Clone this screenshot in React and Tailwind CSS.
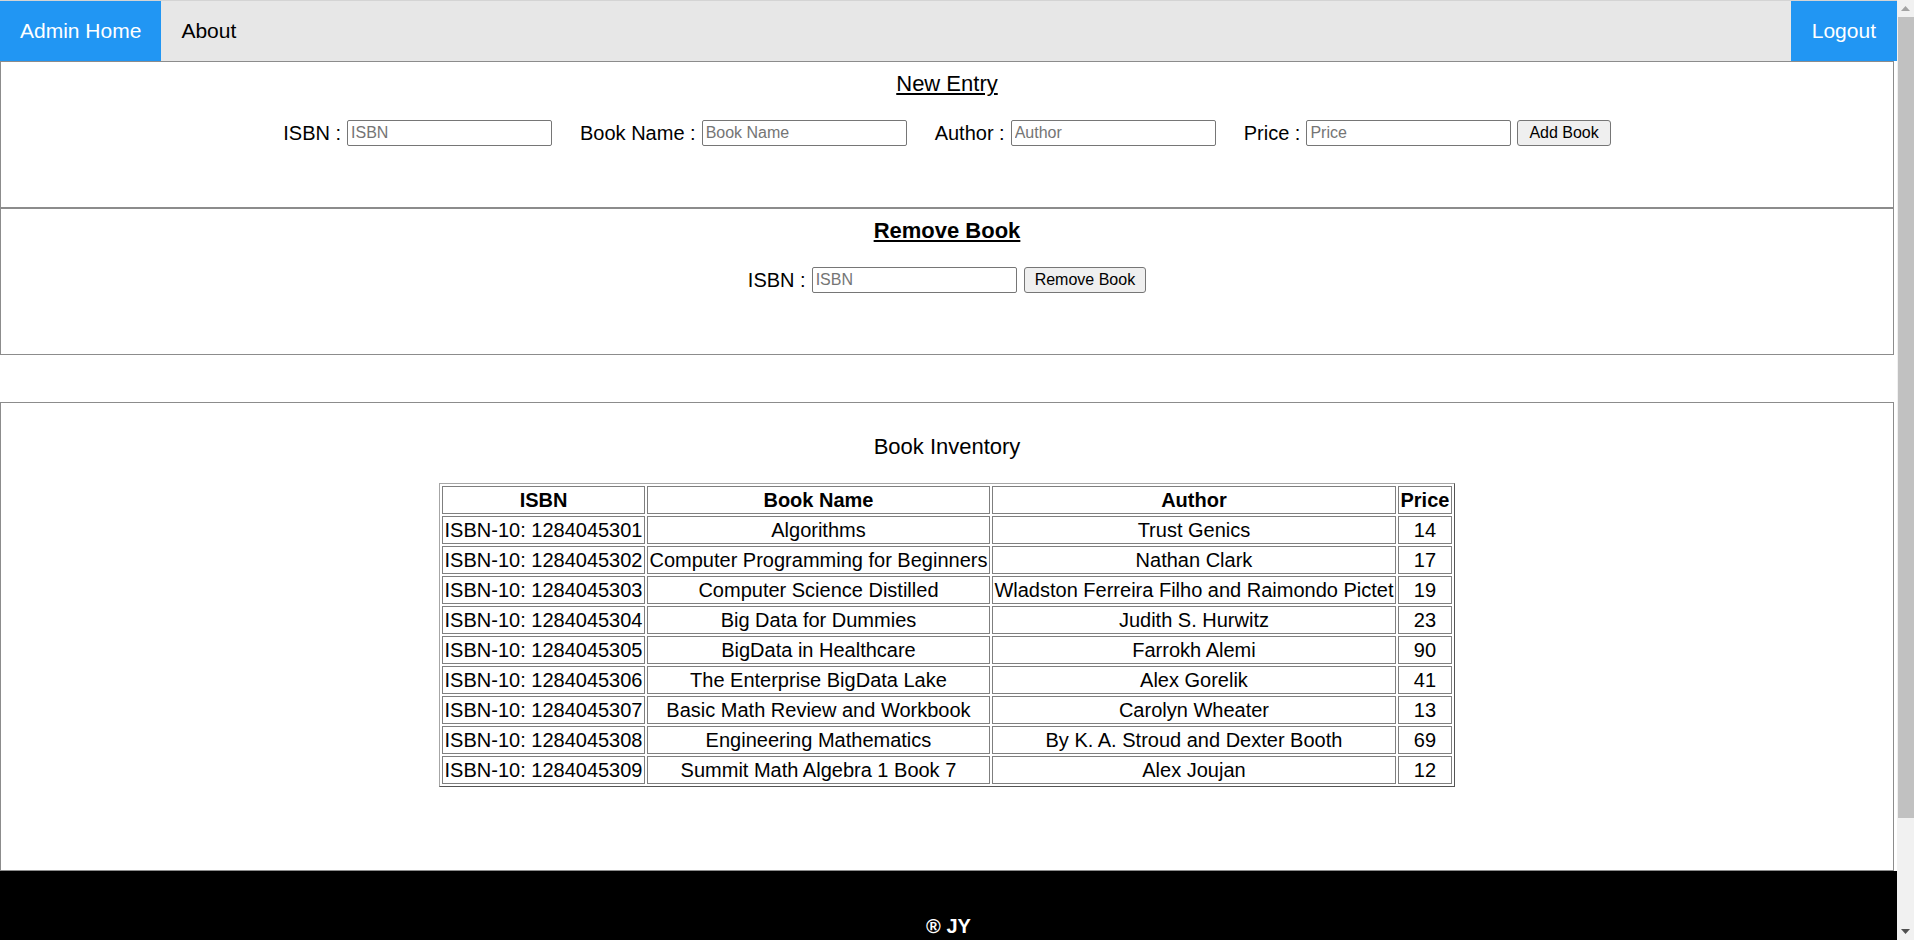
import React from 'react';

const books = [
  { isbn: 'ISBN-10: 1284045301', name: 'Algorithms', author: 'Trust Genics', price: 14 },
  { isbn: 'ISBN-10: 1284045302', name: 'Computer Programming for Beginners', author: 'Nathan Clark', price: 17 },
  { isbn: 'ISBN-10: 1284045303', name: 'Computer Science Distilled', author: 'Wladston Ferreira Filho and Raimondo Pictet', price: 19 },
  { isbn: 'ISBN-10: 1284045304', name: 'Big Data for Dummies', author: 'Judith S. Hurwitz', price: 23 },
  { isbn: 'ISBN-10: 1284045305', name: 'BigData in Healthcare', author: 'Farrokh Alemi', price: 90 },
  { isbn: 'ISBN-10: 1284045306', name: 'The Enterprise BigData Lake', author: 'Alex Gorelik', price: 41 },
  { isbn: 'ISBN-10: 1284045307', name: 'Basic Math Review and Workbook', author: 'Carolyn Wheater', price: 13 },
  { isbn: 'ISBN-10: 1284045308', name: 'Engineering Mathematics', author: 'By K. A. Stroud and Dexter Booth', price: 69 },
  { isbn: 'ISBN-10: 1284045309', name: 'Summit Math Algebra 1 Book 7', author: 'Alex Joujan', price: 12 },
];

const Field = ({ label, placeholder }) => (
  <div className="flex items-center">
    <span className="mr-[6px]">{label}</span>
    <input
      placeholder={placeholder}
      className="w-[205px] h-[26px] border border-[#767676] rounded-[2px] px-[3px] text-[16px] text-black placeholder:text-[#757575] bg-white outline-none"
    />
  </div>
);

const Btn = ({ children, className = '' }) => (
  <button className={`h-[26px] px-[10px] border border-[#767676] rounded-[3px] bg-[#efefef] text-[16px] text-black leading-none ${className}`}>
    {children}
  </button>
);

const Cell = ({ children, head }) => (
  <td className={`h-[28px] px-[1.5px] py-[1px] border border-[#7f7f7f] text-center whitespace-nowrap leading-[24px] ${head ? 'font-bold' : ''}`}>
    {children}
  </td>
);

export default function App() {
  return (
    <div className="h-[940px] flex overflow-hidden bg-white text-black font-['Liberation_Sans',Arial,sans-serif]">
      <div className="flex-1 min-w-0 flex flex-col">
        {/* top nav */}
        <nav className="h-[61px] shrink-0 flex bg-[#e7e7e7] border-t border-[#d4d4d4] text-[21px]">
          <a className="h-full flex items-center px-[20px] bg-[#2196F3] text-white">Admin Home</a>
          <a className="h-full flex items-center px-[20px]">About</a>
          <a className="ml-auto h-full flex items-center px-[21px] bg-[#2196F3] text-white">Logout</a>
        </nav>

        <div className="mr-[3px]">
          <section className="h-[147px] border border-[#8c8c8c] pt-[9px] flex flex-col items-center text-[20px]">
            <h3 className="text-[22px] leading-[25px] underline">New Entry</h3>
            <div className="mt-[22px] flex items-center gap-[28px]">
              <Field label="ISBN :" placeholder="ISBN" />
              <Field label="Book Name :" placeholder="Book Name" />
              <Field label="Author :" placeholder="Author" />
              <div className="flex items-center">
                <Field label="Price :" placeholder="Price" />
                <Btn className="ml-[6px] px-[11px]">Add Book</Btn>
              </div>
            </div>
          </section>

          <section className="h-[147px] border border-[#8c8c8c] pt-[9px] flex flex-col items-center text-[20px]">
            <h3 className="text-[22px] leading-[25px] font-bold underline">Remove Book</h3>
            <div className="mt-[22px] flex items-center">
              <Field label="ISBN :" placeholder="ISBN" />
              <Btn className="ml-[7px]">Remove Book</Btn>
            </div>
          </section>

          <section className="mt-[47px] h-[469px] border border-[#8c8c8c] pt-[31px] flex flex-col items-center text-[20px]">
            <h2 className="text-[22px] leading-[25px]">Book Inventory</h2>
            <table className="mt-[24px] border-separate border-spacing-[2px] border border-t-[#a6a6a6] border-l-[#a6a6a6] border-r-[#555] border-b-[#555]">
              <tbody>
                <tr>
                  <Cell head>ISBN</Cell>
                  <Cell head>Book Name</Cell>
                  <Cell head>Author</Cell>
                  <Cell head>Price</Cell>
                </tr>
                {books.map(b => (
                  <tr key={b.isbn}>
                    <Cell>{b.isbn}</Cell>
                    <Cell>{b.name}</Cell>
                    <Cell>{b.author}</Cell>
                    <Cell>{b.price}</Cell>
                  </tr>
                ))}
              </tbody>
            </table>
          </section>
        </div>

        <footer className="h-[120px] shrink-0 bg-black text-white text-[20px] font-bold text-center pt-[44px] leading-[23px]">
          ® JY
        </footer>
      </div>

      {/* window scrollbar */}
      <div className="w-[17px] shrink-0 bg-[#f1f1f1] flex flex-col">
        <div className="h-[17px] flex items-center justify-center">
          <svg width="9" height="5" viewBox="0 0 9 5"><path d="M0 5 L4.5 0 L9 5 Z" fill="#a3a3a3" /></svg>
        </div>
        <div className="h-[801px] ml-[1px] bg-[#c1c1c1]" />
        <div className="flex-1" />
        <div className="h-[17px] flex items-center justify-center">
          <svg width="9" height="5" viewBox="0 0 9 5"><path d="M0 0 L4.5 5 L9 0 Z" fill="#505050" /></svg>
        </div>
      </div>
    </div>
  );
}
